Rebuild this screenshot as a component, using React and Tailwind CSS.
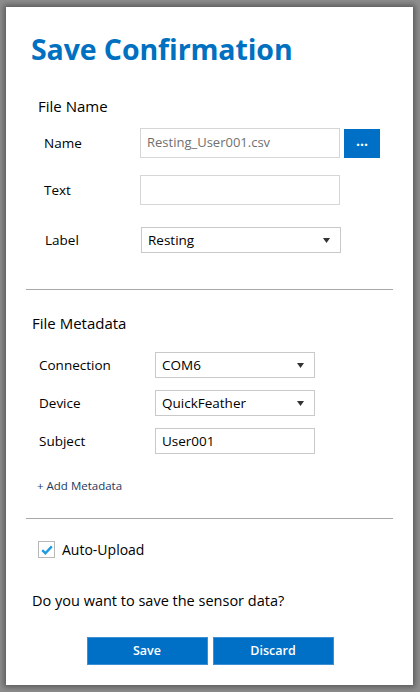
import React from "react";

const font = { fontFamily: '"Open Sans", "Noto Sans", sans-serif' };

function Caret() {
  return (
    <svg width="7" height="5" viewBox="0 0 7 5" className="shrink-0">
      <path d="M0 0 H7 L3.5 5 Z" fill="#333" />
    </svg>
  );
}

function Select({ value, className }) {
  return (
    <div
      className={
        "flex items-center justify-between border border-[#c9c9c9] bg-white pl-[6px] pr-[10px] text-[13.5px] text-black " +
        className
      }
    >
      <span>{value}</span>
      <Caret />
    </div>
  );
}

export default function App() {
  return (
    <div
      className="h-[692px] w-[420px] bg-[#8e8e8e] pt-[7px] overflow-hidden"
      style={font}
    >
      <div className="ml-[6px] h-[678px] w-[407px] bg-white shadow-[0_0_6px_2px_rgba(40,40,40,0.55)] flex flex-col">
        <h1 className="mt-[22px] ml-[25px] h-[40px] leading-[40px] text-[28.5px] font-bold text-[#0070c0] tracking-[-0.1px]">
          Save Confirmation
        </h1>

        <div className="mt-[27px] ml-[32px] h-[20px] leading-[20px] text-[15px] text-black">
          File Name
        </div>

        <div className="mt-[12px] flex items-center h-[30px]">
          <div className="ml-[38px] w-[96px] text-[13.5px] text-black">Name</div>
          <div className="w-[200px] h-[30px] border border-[#d6d6d6] flex items-center pl-[6px] text-[13px] text-[#707070]">
            Resting_User001.csv
          </div>
          <button className="ml-[4px] w-[36px] h-[29px] bg-[#0070c6] flex items-center justify-center text-white font-bold text-[14px] leading-none pb-[4px]">
            ...
          </button>
        </div>

        <div className="mt-[17px] flex items-center h-[30px]">
          <div className="ml-[38px] w-[96px] text-[13.5px] text-black">Text</div>
          <div className="w-[200px] h-[30px] border border-[#d6d6d6]" />
        </div>

        <div className="mt-[22px] flex items-center h-[26px]">
          <div className="ml-[39px] w-[96px] text-[13.5px] text-black">Label</div>
          <Select value="Resting" className="w-[200px] h-[26px]" />
        </div>

        <div className="mt-[36px] ml-[20px] w-[367px] h-px bg-[#a8a8a8]" />

        <div className="mt-[23px] ml-[26px] h-[20px] leading-[20px] text-[15px] text-black">
          File Metadata
        </div>

        <div className="mt-[19px] flex items-center h-[26px]">
          <div className="ml-[33px] w-[116px] text-[13.5px] text-black">Connection</div>
          <Select value="COM6" className="w-[160px] h-[26px]" />
        </div>

        <div className="mt-[12px] flex items-center h-[26px]">
          <div className="ml-[33px] w-[116px] text-[13.5px] text-black">Device</div>
          <Select value="QuickFeather" className="w-[160px] h-[26px]" />
        </div>

        <div className="mt-[12px] flex items-center h-[26px]">
          <div className="ml-[33px] w-[116px] text-[13.5px] text-black">Subject</div>
          <div className="w-[160px] h-[26px] border border-[#c9c9c9] flex items-center pl-[6px] text-[13.5px] text-black">
            User001
          </div>
        </div>

        <div className="mt-[24px] ml-[31px] h-[16px] leading-[16px] text-[11.5px] text-[#1e3a5c]">
          + Add Metadata
        </div>

        <div className="mt-[24px] ml-[20px] w-[367px] h-px bg-[#a8a8a8]" />

        <div className="mt-[22px] ml-[32px] flex items-center h-[17px] gap-[7px]">
          <div className="w-[17px] h-[17px] border border-[#b8b8b8] flex items-center justify-center">
            <svg width="12" height="10" viewBox="0 0 12 10">
              <path
                d="M1.2 5.2 L4.4 8.2 L10.8 1.4"
                fill="none"
                stroke="#1e9be3"
                strokeWidth="2.4"
              />
            </svg>
          </div>
          <span className="text-[14px] text-black">Auto-Upload</span>
        </div>

        <div className="mt-[33px] ml-[26px] h-[20px] leading-[20px] text-[14.5px] text-black">
          Do you want to save the sensor data?
        </div>

        <div className="mt-[26px] flex justify-center gap-[5px] pl-[1px]">
          <button className="w-[121px] h-[28px] bg-[#0070c6] border border-[#3d8fd3] text-white text-[12.5px] font-semibold">
            Save
          </button>
          <button className="w-[121px] h-[28px] bg-[#0070c6] border border-[#3d8fd3] text-white text-[12.5px] font-semibold">
            Discard
          </button>
        </div>
      </div>
    </div>
  );
}
